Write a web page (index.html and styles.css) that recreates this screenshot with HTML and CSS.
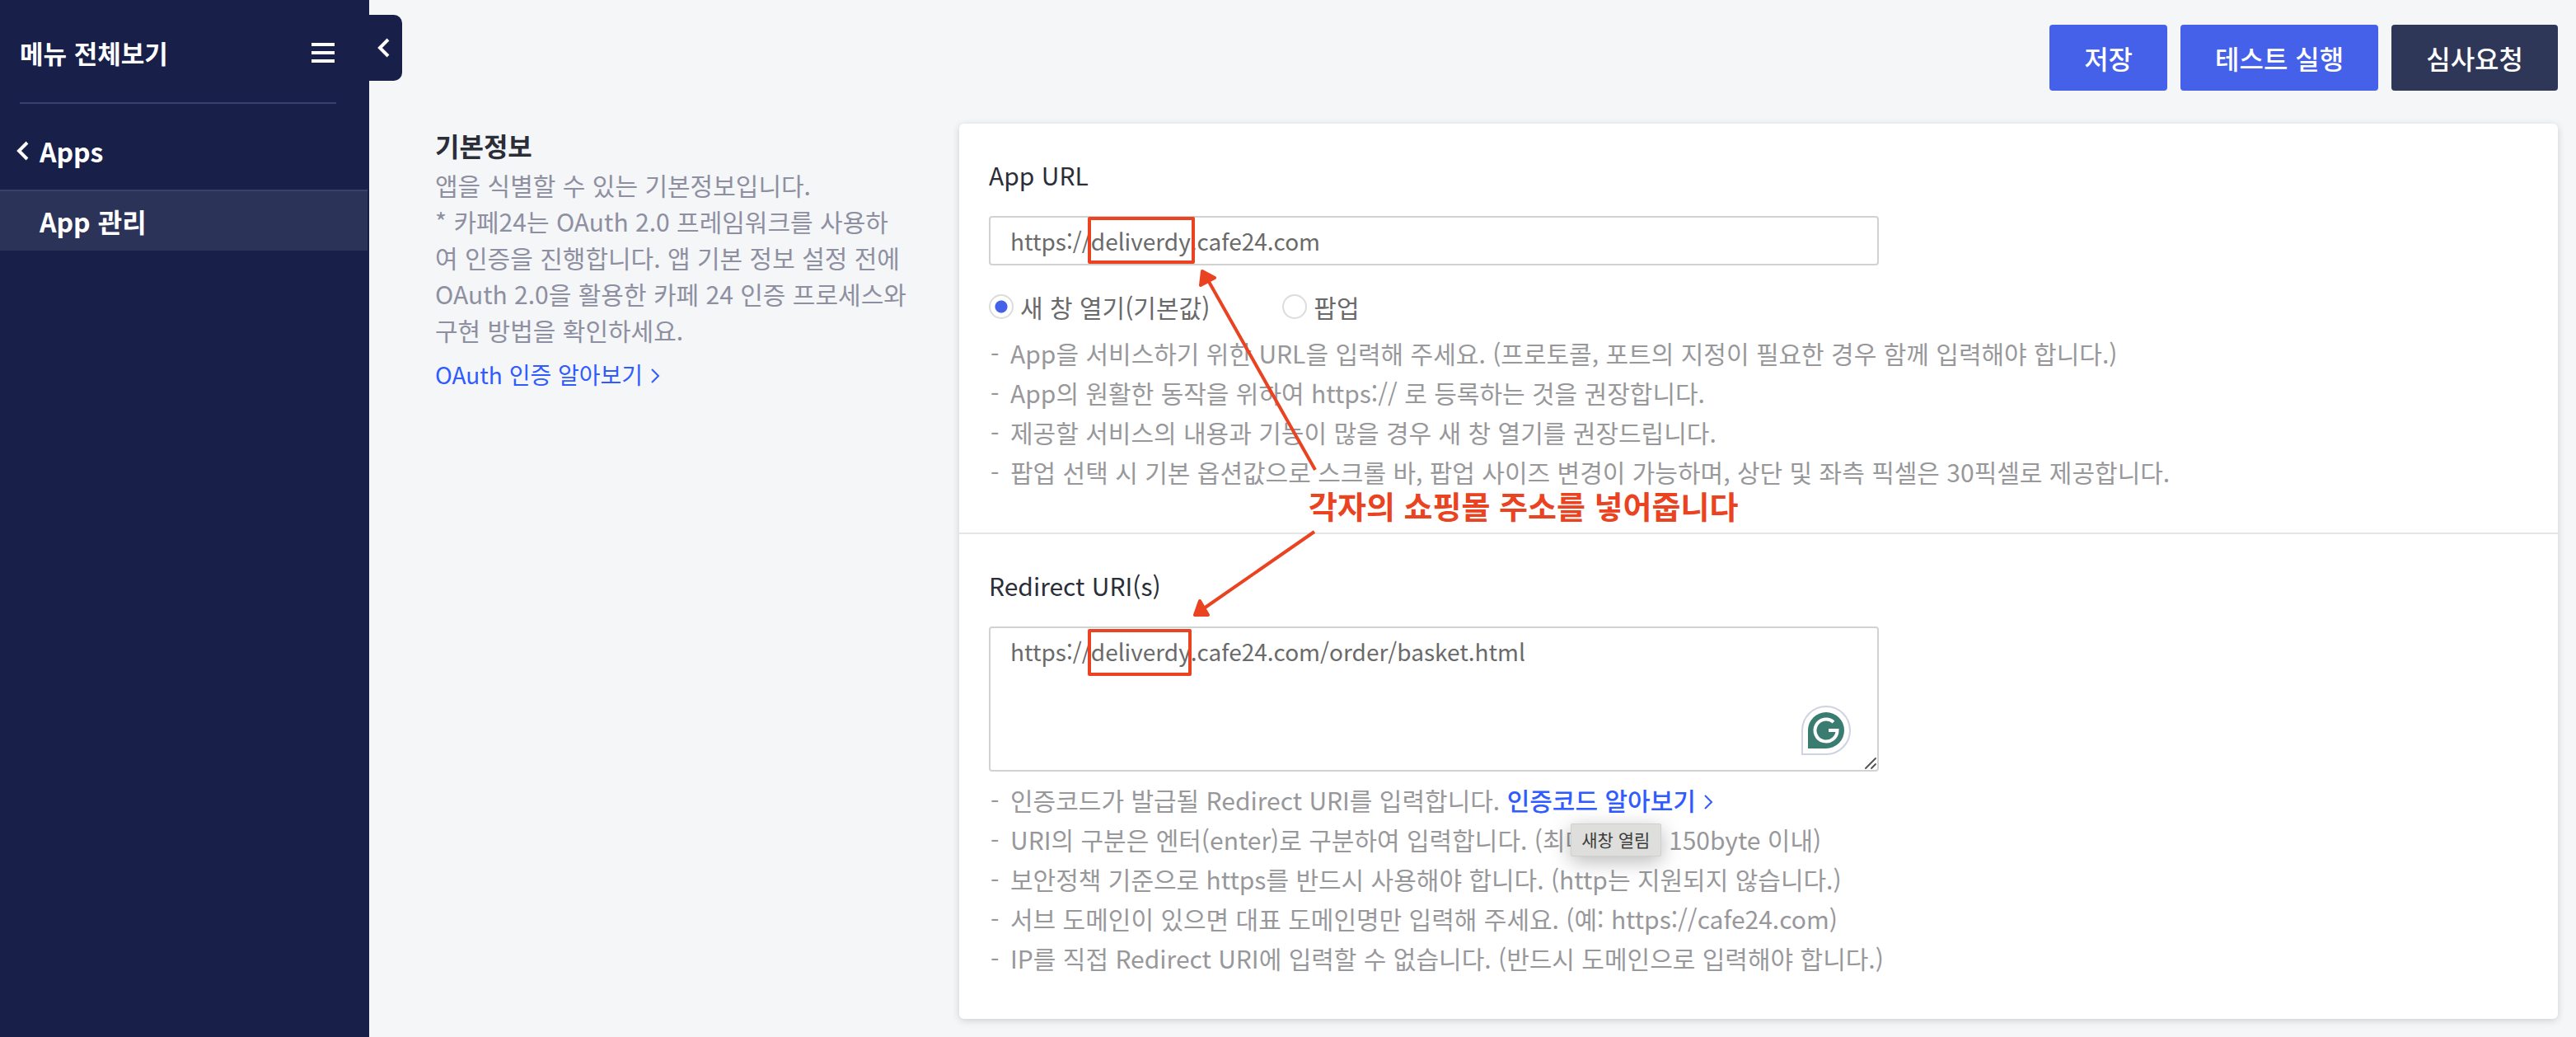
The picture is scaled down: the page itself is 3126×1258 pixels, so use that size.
FILE: index.html
```html
<!DOCTYPE html>
<html lang="ko">
<head>
<meta charset="utf-8">
<meta name="viewport" content="width=device-width, initial-scale=1">
<title>App 관리</title>
<link rel="stylesheet" href="styles.css">
</head>
<body>
<div class="layout">
  <aside class="sidebar">
    <div class="sidebar-head">
      <span>메뉴 전체보기</span>
      <button class="icon-button" type="button" aria-label="메뉴">
        <svg width="28" height="24" viewBox="0 0 28 24" fill="#fff"><path d="M0 0h28v4H0zM0 10h28v4H0zM0 20h28v4H0z"/></svg>
      </button>
    </div>
    <nav class="menu">
      <a class="menu-back" href="#apps">
        <svg width="16" height="24" viewBox="0 0 16 24" fill="none" stroke="#fff" stroke-width="4"><path d="M13 2L3 12l10 10"/></svg>
        Apps
      </a>
      <a class="menu-item" href="#app" aria-current="page">App 관리</a>
    </nav>
    <button class="sidebar-toggle" type="button" aria-label="메뉴 접기">
      <svg width="16" height="24" viewBox="0 0 16 24" fill="none" stroke="#fff" stroke-width="4"><path d="M13 2L3 12l10 10"/></svg>
    </button>
  </aside>

  <main class="main">
    <div class="actions">
      <button class="button" type="button">저장</button>
      <button class="button" type="button">테스트 실행</button>
      <button class="button button-dark" type="button">심사요청</button>
    </div>

    <div class="content">
      <section class="intro">
        <h2>기본정보</h2>
        <p>앱을 식별할 수 있는 기본정보입니다.<br>* 카페24는 OAuth 2.0 프레임워크를 사용하여 인증을 진행합니다. 앱 기본 정보 설정 전에 OAuth 2.0을 활용한 카페 24 인증 프로세스와 구현 방법을 확인하세요.</p>
        <a class="link intro-link" href="#oauth">OAuth 인증 알아보기<svg class="chevron" width="12" height="20" viewBox="0 0 12 20" fill="none" stroke="currentColor" stroke-width="2"><path d="M1 2l8 8-8 8"/></svg></a>
      </section>

      <form class="card">
        <section class="field">
          <label class="field-title" for="app-url">App URL</label>
          <input class="text-box" id="app-url" type="text" value="https://deliverdy.cafe24.com">
          <div class="radios">
            <label class="radio"><input type="radio" name="open" checked>새 창 열기(기본값)</label>
            <label class="radio"><input type="radio" name="open">팝업</label>
          </div>
          <ul class="tips">
            <li>App을 서비스하기 위한 URL을 입력해 주세요. (프로토콜, 포트의 지정이 필요한 경우 함께 입력해야 합니다.)</li>
            <li>App의 원활한 동작을 위하여 https:// 로 등록하는 것을 권장합니다.</li>
            <li>제공할 서비스의 내용과 기능이 많을 경우 새 창 열기를 권장드립니다.</li>
            <li>팝업 선택 시 기본 옵션값으로 스크롤 바, 팝업 사이즈 변경이 가능하며, 상단 및 좌측 픽셀은 30픽셀로 제공합니다.</li>
          </ul>
        </section>

        <section class="field">
          <label class="field-title" for="redirect">Redirect URI(s)</label>
          <div class="area-wrap">
            <textarea class="text-box text-area" id="redirect" spellcheck="false">https://deliverdy.cafe24.com/order/basket.html</textarea>
            <svg class="grammar-badge" width="60" height="60" viewBox="0 0 60 60">
              <path d="M1 59V30A29 29 0 1 1 30 59z" fill="#fff" stroke="#cfd2e0" stroke-width="2"/>
              <path d="M8 52V30A22 22 0 1 1 30 52z" fill="#3a7d70"/>
              <path d="M39 20A13.500 13.500 0 1 0 43.500 30H33" fill="none" stroke="#fff" stroke-width="4"/>
            </svg>
            <svg class="resize-grip" width="16" height="16" viewBox="0 0 16 16" stroke="#555" stroke-width="2" stroke-linecap="round"><path d="M2 14L14 2M9 14l5-5"/></svg>
          </div>
          <ul class="tips">
            <li>인증코드가 발급될 Redirect URI를 입력합니다. <a class="link tip-link" href="#code">인증코드 알아보기<svg class="chevron" width="12" height="20" viewBox="0 0 12 20" fill="none" stroke="currentColor" stroke-width="2"><path d="M1 2l8 8-8 8"/></svg><span class="tooltip" role="tooltip">새창 열림</span></a></li>
            <li>URI의 구분은 엔터(enter)로 구분하여 입력합니다. (최대 10개 / 150byte 이내)</li>
            <li>보안정책 기준으로 https를 반드시 사용해야 합니다. (http는 지원되지 않습니다.)</li>
            <li>서브 도메인이 있으면 대표 도메인명만 입력해 주세요. (예: https://cafe24.com)</li>
            <li>IP를 직접 Redirect URI에 입력할 수 없습니다. (반드시 도메인으로 입력해야 합니다.)</li>
          </ul>
        </section>

        <svg class="marks" width="500" height="680" viewBox="0 0 500 680" fill="none" stroke="#ea4321" stroke-width="4" stroke-linejoin="round">
          <path d="M158 115h126v53H158zM158 615h122v53H158z"/>
          <path d="M302 190L432 420M431 495L297 588"/>
          <path d="M295 179l15 8-17 9zM292 579l-6 17h16z" fill="#ea4321"/>
        </svg>
        <strong class="callout">각자의 쇼핑몰 주소를 넣어줍니다</strong>
      </form>
    </div>
  </main>
</div>
</body>
</html>
```
FILE: styles.css
```css
* {
  box-sizing: border-box;
}

body {
  margin: 0;
  background: #f4f6f8;
  color: #2b2e38;
  font-family: "Noto Sans CJK KR", "Noto Sans", sans-serif;
  font-size: 30px;
}

button,
input,
textarea {
  font: inherit;
}

a {
  color: inherit;
  text-decoration: none;
}

.layout {
  display: flex;
  min-height: 100vh;
}

/* Sidebar */

.sidebar {
  position: relative;
  flex: none;
  width: 448px;
  background: #18204a;
  color: #fff;
  font-size: 32px;
  font-weight: 700;
  line-height: 48px;
}

.sidebar-head {
  display: flex;
  align-items: center;
  justify-content: space-between;
  height: 126px;
  margin: 0 40px 0 24px;
  padding: 4px 2px 0 0;
  border-bottom: 2px solid #38406e;
  font-size: 31px;
}

.icon-button {
  display: flex;
  padding: 0;
  border: 0;
  background: none;
}

.menu-back,
.menu-item {
  display: flex;
  align-items: center;
}

.menu-back {
  gap: 12px;
  height: 104px;
  padding: 10px 20px 0;
}

.menu-item {
  height: 74px;
  margin-right: 2px;
  padding-left: 48px;
  border-top: 2px solid #38406e;
  background: #2c3358;
}

.sidebar-toggle {
  position: absolute;
  top: 18px;
  left: 100%;
  display: flex;
  align-items: center;
  width: 40px;
  height: 80px;
  padding: 0 10px;
  border: 0;
  border-radius: 0 10px 10px 0;
  background: #18204a;
}

/* Main */

.main {
  flex: 1;
  min-width: 0;
  padding: 30px 22px 22px 80px;
}

.actions {
  display: flex;
  justify-content: flex-end;
  gap: 16px;
}

.button {
  height: 80px;
  padding: 0 42px;
  border: 0;
  border-radius: 4px;
  background: #4561ea;
  color: #fff;
  font-size: 32px;
  font-weight: 500;
}

.button-dark {
  background: #2f3759;
}

.content {
  display: grid;
  grid-template-columns: 574px 1fr;
  gap: 62px;
  margin-top: 40px;
}

.intro h2 {
  margin: 0;
  padding-top: 2px;
  font-size: 32px;
  font-weight: 700;
  line-height: 48px;
}

.intro p {
  margin: 2px 0 0;
  color: #8e8fa1;
  line-height: 44px;
}

.link {
  color: #2f5bff;
}

.intro-link {
  display: inline-block;
  margin-top: 10px;
  font-size: 28px;
  line-height: 44px;
}

.chevron {
  margin-left: 10px;
}

.card {
  position: relative;
  border-radius: 6px;
  background: #fff;
  box-shadow: 0 2px 10px rgba(0, 0, 0, 0.16);
}

.field {
  padding: 38px 36px 50px;
}

.field + .field {
  border-top: 2px solid #e6e6e6;
}

.field-title {
  display: block;
  margin-bottom: 26px;
  line-height: 48px;
}

.text-box {
  display: block;
  width: 1080px;
  max-width: 100%;
  height: 60px;
  padding: 0 24px;
  border: 2px solid #d2d2d2;
  border-radius: 4px;
  background: #fff;
  color: #6a6a6a;
  font-size: 28px;
}

.area-wrap {
  position: relative;
  width: 1080px;
  max-width: 100%;
}

.text-area {
  height: 176px;
  padding: 6px 24px;
  line-height: 44px;
  resize: none;
}

.grammar-badge {
  position: absolute;
  right: 34px;
  bottom: 20px;
}

.resize-grip {
  position: absolute;
  right: 2px;
  bottom: 2px;
}

.radios {
  display: flex;
  gap: 88px;
  margin-top: 28px;
  color: #6a6a6a;
  line-height: 44px;
}

.radio {
  display: flex;
  align-items: center;
  gap: 8px;
}

.radio input {
  width: 30px;
  height: 30px;
  margin: 0;
  border: 2px solid #dcdcdc;
  border-radius: 50%;
  background: #fff;
  appearance: none;
}

.radio input:checked {
  background: radial-gradient(circle, #4561ea 7px, #fff 8px);
}

.tips {
  margin: 10px 0 0;
  padding: 0;
  color: #98989b;
  line-height: 48px;
  list-style: none;
}

.tips li {
  display: flex;
  white-space: pre-wrap;
}

.tips li::before {
  flex: none;
  width: 24px;
  padding-left: 2px;
  content: "-";
}

.tip-link {
  position: relative;
  font-weight: 500;
}

.tooltip {
  position: absolute;
  top: 53px;
  right: 64px;
  width: 110px;
  height: 40px;
  border: 1px solid #d0d0ce;
  border-radius: 2px;
  background: #dededc;
  box-shadow: 0 6px 24px rgba(0, 0, 0, 0.28);
  color: #3c3c3c;
  font-size: 21px;
  font-weight: 400;
  line-height: 36px;
  text-align: center;
}

/* Annotation layer */

.marks,
.callout {
  position: absolute;
  pointer-events: none;
}

.marks {
  top: 0;
  left: 0;
}

.callout {
  top: 443px;
  left: 424px;
  color: #ea4321;
  font-size: 38px;
  line-height: 40px;
  white-space: nowrap;
}
```
